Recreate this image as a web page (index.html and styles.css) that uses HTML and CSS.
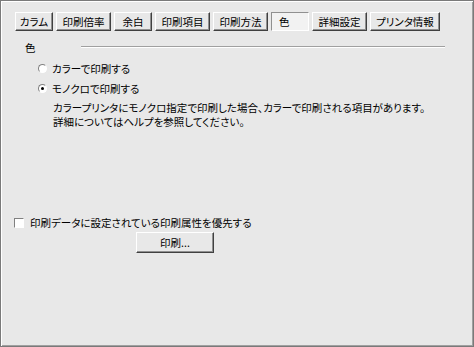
FILE: index.html
```html
<!DOCTYPE html>
<html lang="ja">
<head>
    <meta charset="UTF-8">
    <title>印刷設定 - 色</title>
    <link rel="stylesheet" href="styles.css">
</head>
<body>
    <div class="window">
        <div class="tabs">
            <button class="tab tab-s">カラム</button>
            <button class="tab tab-m">印刷倍率</button>
            <button class="tab tab-s">余白</button>
            <button class="tab tab-m">印刷項目</button>
            <button class="tab tab-m">印刷方法</button>
            <button class="tab tab-s active">色</button>
            <button class="tab tab-m">詳細設定</button>
            <button class="tab tab-l">プリンタ情報</button>
        </div>

        <div class="group">
            <div class="group-title">
                <span>色</span>
                <div class="group-line"></div>
            </div>

            <label class="option">
                <span class="radio"></span>
                <span>カラーで印刷する</span>
            </label>
            <label class="option">
                <span class="radio checked"></span>
                <span>モノクロで印刷する</span>
            </label>

            <div class="note">
                <p>カラープリンタにモノクロ指定で印刷した場合、カラーで印刷される項目があります。</p>
                <p>詳細についてはヘルプを参照してください。</p>
            </div>
        </div>

        <label class="check-row">
            <span class="checkbox"></span>
            <span>印刷データに設定されている印刷属性を優先する</span>
        </label>

        <div class="actions">
            <button class="print-btn">印刷...</button>
        </div>
    </div>
</body>
</html>
```

FILE: styles.css
```css
* {
    margin: 0;
    padding: 0;
    box-sizing: border-box;
}

body {
    font-family: "Noto Sans CJK JP", "Liberation Sans", sans-serif;
    font-size: 10.5px;
    font-feature-settings: "palt";
    color: #000;
    background: #e8e8e8;
}

.window {
    width: 474px;
    height: 347px;
    background: #e8e8e8;
    border: 1px solid #7a7a7a;
    box-shadow: inset 1px 1px 0 #fff, inset -1px -1px 0 #a0a0a0;
    padding: 11px 0 0 14px;
}

.tabs {
    display: flex;
    gap: 3px;
}

.tab {
    height: 19px;
    font: inherit;
    background: #e8e8e8;
    border: 1px solid;
    border-color: #fff #404040 #404040 #fff;
    box-shadow: inset -1px -1px 0 #909090;
    line-height: 16px;
    padding: 0;
}

.tab-s { width: 38px; }
.tab-m { width: 55px; }
.tab-l { width: 70px; }

.tab.active {
    background: #f2f2f2;
    border-color: #909090 #fff #fff #909090;
    box-shadow: none;
    text-align: left;
    padding-left: 7px;
}

.group {
    padding: 8px 0 0 10px;
}

.group-title {
    display: flex;
    align-items: center;
    gap: 45px;
    height: 16px;
}

.group-line {
    width: 364px;
    height: 2px;
    border-top: 1px solid #a0a0a0;
    border-bottom: 1px solid #fff;
}

.option {
    display: flex;
    align-items: center;
    gap: 5px;
    height: 20px;
    padding-left: 13px;
}

.option:first-of-type {
    margin-top: 3px;
}

.radio {
    width: 9px;
    height: 9px;
    border-radius: 50%;
    border: 1px solid;
    border-color: #808080 #fff #fff #808080;
    background: #fff;
    position: relative;
}

.radio.checked::after {
    content: "";
    position: absolute;
    left: 2px;
    top: 2px;
    width: 3px;
    height: 3px;
    border-radius: 50%;
    background: #000;
}

.note {
    padding: 3px 0 0 28px;
    line-height: 14px;
}

.check-row {
    display: flex;
    align-items: center;
    gap: 6px;
    margin: 86px 0 0 -1px;
}

.checkbox {
    width: 10px;
    height: 10px;
    background: #fff;
    border: 1px solid;
    border-color: #808080 #fff #fff #808080;
}

.actions {
    padding: 2px 0 0 121px;
}

.print-btn {
    width: 78px;
    height: 21px;
    font: inherit;
    background: #e8e8e8;
    border: 1px solid;
    border-color: #fff #404040 #404040 #fff;
    box-shadow: inset -1px -1px 0 #909090;
}
```
